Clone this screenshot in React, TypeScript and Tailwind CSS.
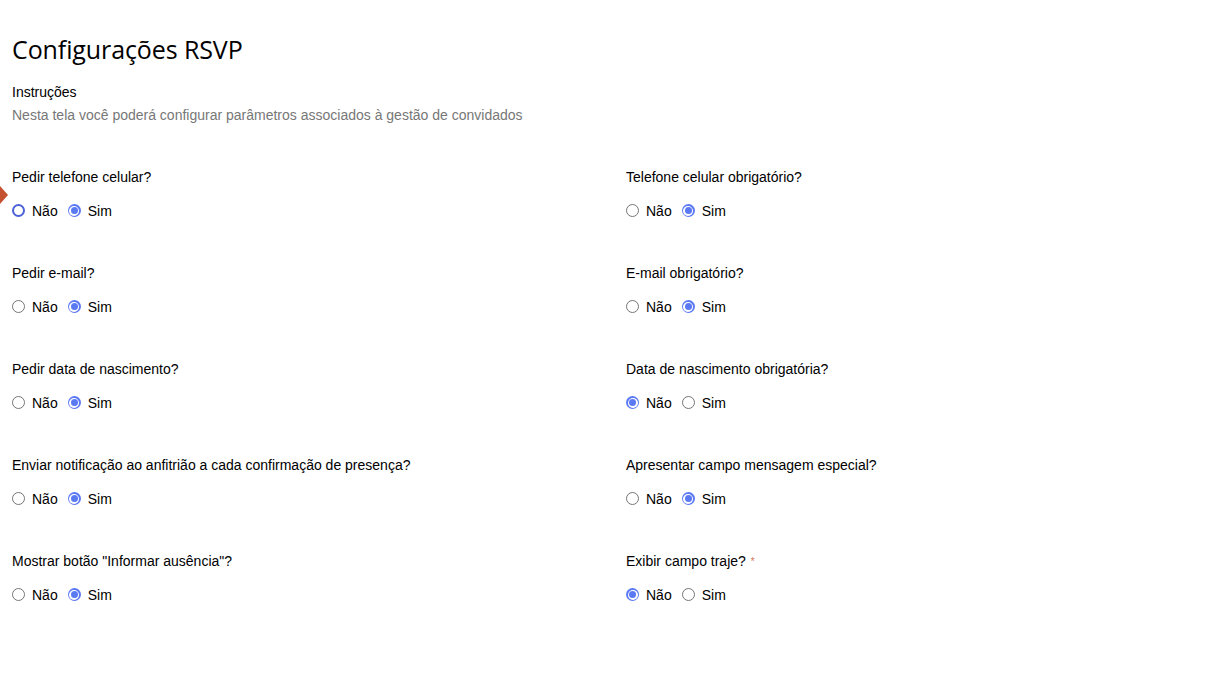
import { useState } from "react";

type Question = {
  id: string;
  label: string;
  value: "nao" | "sim";
  required?: boolean;
};

const left: Question[] = [
  { id: "pedirCelular", label: "Pedir telefone celular?", value: "sim" },
  { id: "pedirEmail", label: "Pedir e-mail?", value: "sim" },
  { id: "pedirNascimento", label: "Pedir data de nascimento?", value: "sim" },
  {
    id: "notificacao",
    label: "Enviar notificação ao anfitrião a cada confirmação de presença?",
    value: "sim",
  },
  { id: "ausencia", label: 'Mostrar botão "Informar ausência"?', value: "sim" },
];

const right: Question[] = [
  { id: "celularObrig", label: "Telefone celular obrigatório?", value: "sim" },
  { id: "emailObrig", label: "E-mail obrigatório?", value: "sim" },
  { id: "nascimentoObrig", label: "Data de nascimento obrigatória?", value: "nao" },
  { id: "mensagem", label: "Apresentar campo mensagem especial?", value: "sim" },
  { id: "traje", label: "Exibir campo traje?", value: "nao", required: true },
];

const Radio = ({ checked, focused }: { checked: boolean; focused?: boolean }) => {
  if (checked) {
    return (
      <span className="flex h-[13px] w-[13px] items-center justify-center rounded-full bg-[#5a79f2]">
        <span className="flex h-[10px] w-[10px] items-center justify-center rounded-full bg-white">
          <span className="h-[7px] w-[7px] rounded-full bg-[#5a79f2]" />
        </span>
      </span>
    );
  }
  if (focused) {
    return <span className="h-[13px] w-[13px] rounded-full border-[2.5px] border-[#4c62d6] bg-white" />;
  }
  return <span className="h-[13px] w-[13px] rounded-full border border-[#767676] bg-white" />;
};

const Field = ({
  q,
  onChange,
  focused,
}: {
  q: Question;
  onChange: (v: "nao" | "sim") => void;
  focused?: boolean;
}) => (
  <div>
    <div className="text-sm leading-[17px] text-black">
      {q.label}
      {q.required && <span className="ml-[5px] align-top text-[10px] text-[#d9745a]">*</span>}
    </div>
    <div className="mt-[16px] flex h-[17px] items-center text-sm text-black">
      <button onClick={() => onChange("nao")} className="flex items-center gap-[7px]">
        <Radio checked={q.value === "nao"} focused={focused} />
        <span>Não</span>
      </button>
      <button onClick={() => onChange("sim")} className="ml-[10px] flex items-center gap-[7px]">
        <Radio checked={q.value === "sim"} />
        <span>Sim</span>
      </button>
    </div>
  </div>
);

const App = () => {
  const [lq, setLq] = useState(left);
  const [rq, setRq] = useState(right);

  const update = (list: Question[], set: (l: Question[]) => void, id: string, v: "nao" | "sim") =>
    set(list.map((q) => (q.id === id ? { ...q, value: v } : q)));

  return (
    <div className="relative min-h-screen bg-white font-['Liberation_Sans',Arial,sans-serif]">
      {/* tour marker */}
      <div className="absolute left-0 top-[186px] h-0 w-0 border-y-[9px] border-l-[8px] border-y-transparent border-l-[#c4512f]" />

      <div className="px-3 pt-[34px]">
        <h1 className="font-['Open_Sans',sans-serif] text-[25px] leading-[30px] font-normal tracking-[-0.1px] text-black">
          Configurações RSVP
        </h1>

        <div className="mt-[20px]">
          <div className="text-sm leading-[17px] text-black">Instruções</div>
          <div className="mt-[6px] text-sm leading-[17px] text-[#777]">
            Nesta tela você poderá configurar parâmetros associados à gestão de convidados
          </div>
        </div>

        <div className="mt-[45px] grid grid-cols-[582px_1fr] gap-x-[32px] gap-y-[46px]">
          {lq.map((q, i) => (
            <div key={q.id} className="contents">
              <Field q={q} focused={i === 0} onChange={(v) => update(lq, setLq, q.id, v)} />
              <Field q={rq[i]} onChange={(v) => update(rq, setRq, rq[i].id, v)} />
            </div>
          ))}
        </div>
      </div>
    </div>
  );
};

export default App;
